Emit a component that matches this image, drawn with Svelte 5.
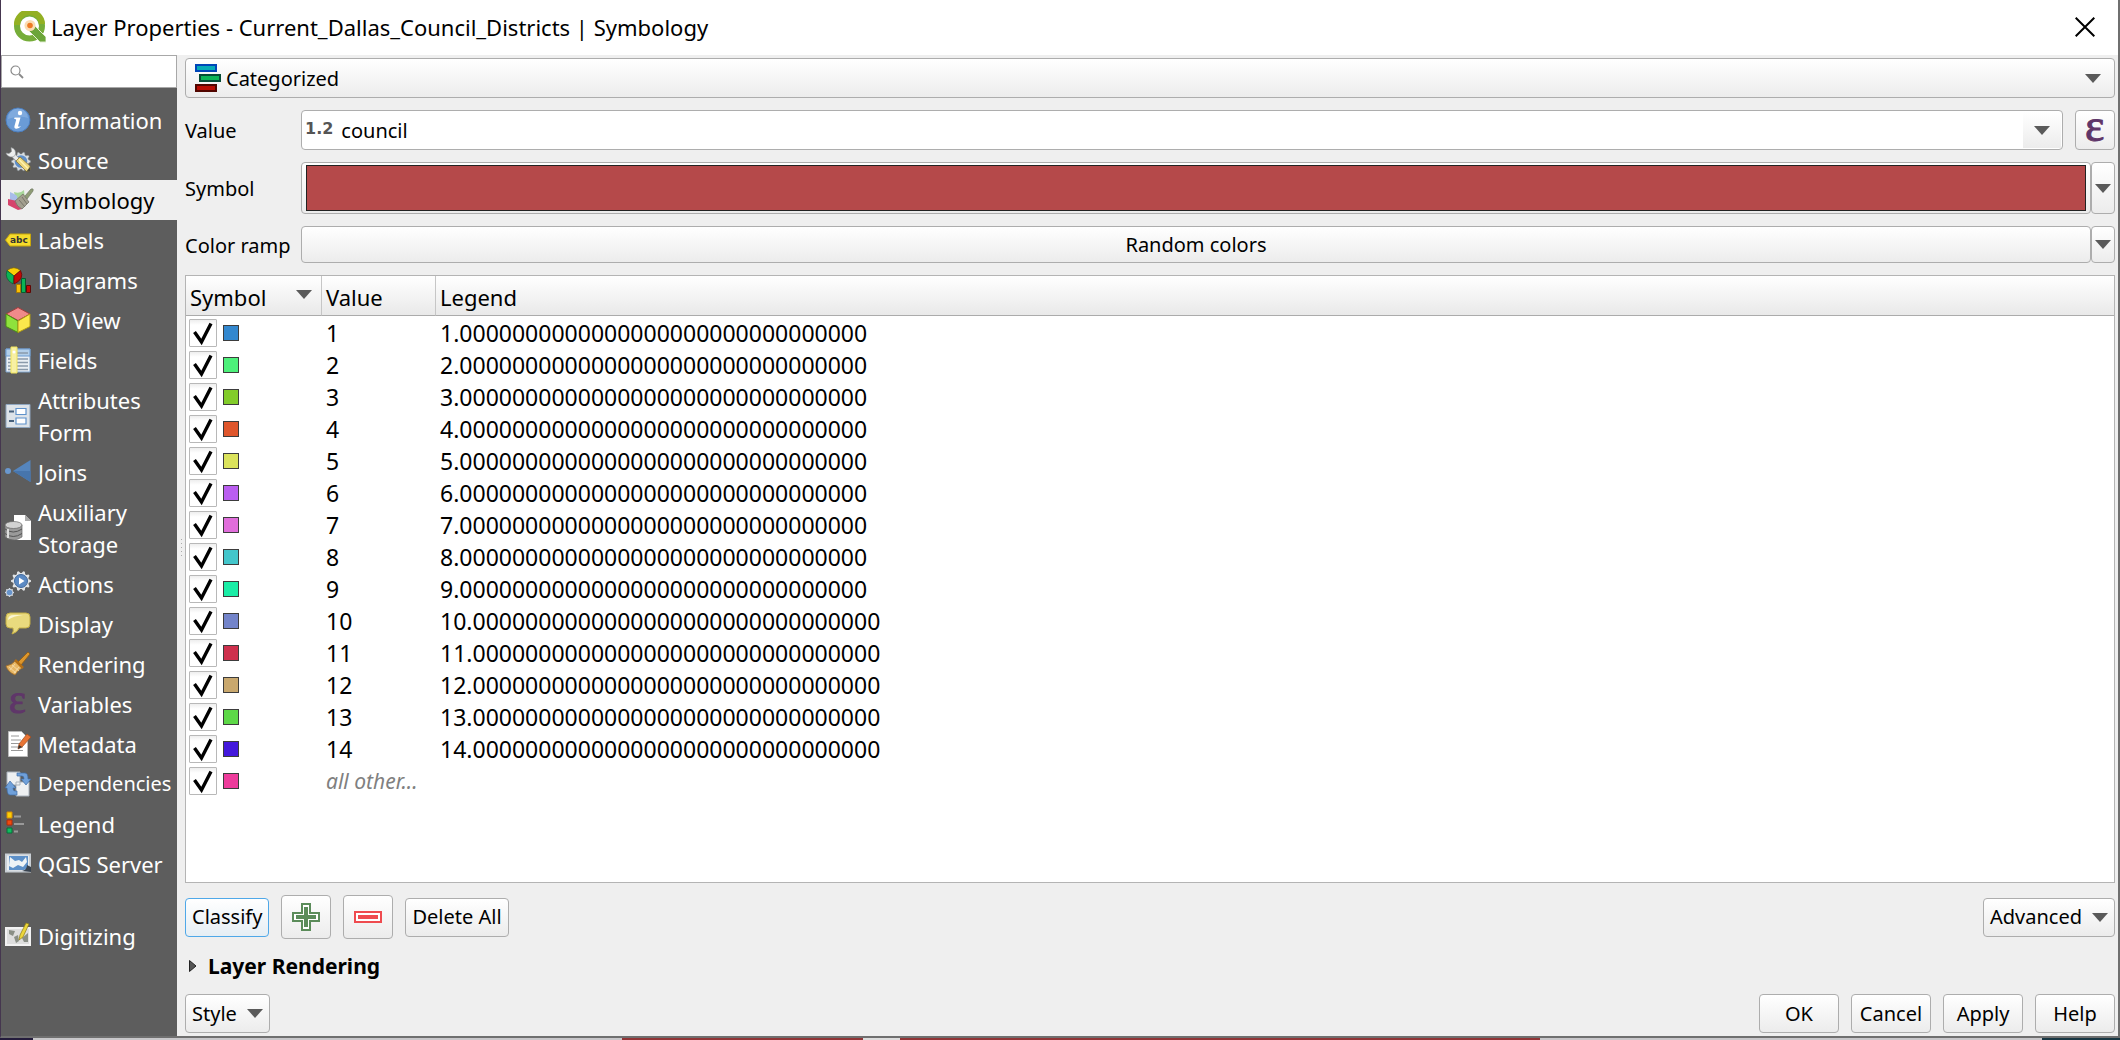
<script>
  const rows = [
    ['1', '#3388cf'], ['2', '#4df07a'], ['3', '#82cc2a'], ['4', '#df562c'], ['5', '#dbe35c'],
    ['6', '#ba5ef0'], ['7', '#e06edb'], ['8', '#43c6cb'], ['9', '#1aeda6'], ['10', '#7384ca'],
    ['11', '#ce304d'], ['12', '#c9a86e'], ['13', '#5dd847'], ['14', '#4318dc'], ['', '#ee3c9c']
  ];
  const zeros = '0'.repeat(31);
  const items = [
    ['Information', 'info'], ['Source', 'source'], ['Symbology', 'symbology'], ['Labels', 'labels'],
    ['Diagrams', 'diagrams'], ['3D View', 'cube'], ['Fields', 'fields'], ['Attributes Form', 'form'],
    ['Joins', 'joins'], ['Auxiliary Storage', 'storage'], ['Actions', 'actions'], ['Display', 'display'],
    ['Rendering', 'rendering'], ['Variables', 'variables'], ['Metadata', 'metadata'],
    ['Dependencies', 'deps'], ['Legend', 'legend'], ['QGIS Server', 'server'], ['Digitizing', 'digitizing']
  ];
  const gear = (cx, cy, r, n) => {
    let d = '';
    for (let i = 0; i < n * 4; i++) {
      const a = ((i - 0.5) / (n * 4)) * Math.PI * 2;
      const q = i % 4 < 2 ? r : r * 0.8;
      d += `${i ? 'L' : 'M'}${(cx + q * Math.cos(a)).toFixed(2)} ${(cy + q * Math.sin(a)).toFixed(2)}`;
    }
    return d + 'Z';
  };
</script>

{#snippet arrow()}
  <svg class="arrow" viewBox="0 0 16 9" aria-hidden="true"><path d="M0 0H16L8 9Z" fill="#5a5a5a" /></svg>
{/snippet}

{#snippet icon(name)}
  <svg class="icon" viewBox="0 0 26 26" aria-hidden="true">
    {#if name === 'info'}
      <circle cx="13" cy="13" r="12" fill="#6a9bd6" stroke="#4b7dbc" />
      <path d="M3 12a10 10 0 0 1 20-1q-9-3-20 1z" fill="#8db4e2" opacity=".6" />
      <circle cx="15" cy="6" r="2.2" fill="#fff" />
      <path d="M9.500 10.500h6l-2.400 8.400q0 1.400 3 .1-2 2.800-4.800 2.700-2.500-.2-1.800-2.700l1.700-6.300q-.2-.8-2-.6z" fill="#fff" />
    {:else if name === 'source'}
      <path d={gear(16, 14.500, 9.500, 10)} fill="#d9dde0" stroke="#8b9498" stroke-width=".5" />
      <circle cx="16" cy="14.500" r="6.300" fill="#5f8fc9" />
      <path d="M6 6l9 9" stroke="#8b8f90" stroke-width="5" /><path d="M6 6l9 9" stroke="#e9ebec" stroke-width="3.600" />
      <path d="M1 6a5.500 5.500 0 0 0 9 2.500A5.500 5.500 0 0 0 6 .500l.500 4-2.500 2z" fill="#eceeee" stroke="#8b8f90" stroke-width=".6" />
      <path d="M11 14l4-4 10 9v4l-3 2z" fill="#ecd77c" stroke="#8a7738" stroke-width=".8" />
      <path d="M14 12.500l9 9" stroke="#fff3b0" stroke-width="1.400" /><path d="M25 20v4l-4 1z" fill="#4a4a3a" />
    {:else if name === 'symbology'}
      <path d="M7 5q6 2 10-2l1 10-8 6z" fill="#a8d69a" />
      <path d="M3 5q5 2 7 4l1 6-8-1z" fill="#a9bdea" />
      <path d="M1 12l9 2 5 8-4 1-10-5z" fill="#d6446c" />
      <path d="M8 14l8-7 6 8-7 7q-5-2-7-8z" fill="#a39f8f" stroke="#77756a" stroke-width=".8" />
      <path d="M12 13l6 7M15 10l5 7" stroke="#77756a" />
      <path d="M18 9l6-7q3-1 2 2l-6 8z" fill="#8f9c75" stroke="#77806a" stroke-width=".8" />
    {:else if name === 'labels'}
      <path d="M0.500 13L5 7H25.500V19H5Z" fill="#f6dc2c" stroke="#c9a80b" />
      <text x="5" y="16" class="abc">abc</text>
    {:else if name === 'diagrams'}
      <path d="M9 9L2 3.500Q9-2 15.500 3.500Z" fill="#fbd006" stroke="#7c6405" stroke-width=".7" />
      <path d="M9 9L2 3.500Q-1 12 8 17Z" fill="#0bb455" stroke="#075b30" stroke-width=".7" />
      <path d="M9 9L15.500 3.500Q20 12 9 17Z" fill="#c20b06" stroke="#5e0804" stroke-width=".7" />
      <path d="M11.500 17.500h4v8h-4z" fill="#fbc006" stroke="#a97b04" />
      <path d="M16.500 11.500h4v14h-4z" fill="#0bb455" stroke="#075b30" />
      <path d="M21.500 18.500h4v7h-4z" fill="#c20b06" stroke="#5e0804" />
    {:else if name === 'cube'}
      <path d="M13 .500L25 7 13 13.500 1 7Z" fill="#f08a8a" stroke="#a33c3c" />
      <path d="M1 7l12 7v11.500L1 19.500Z" fill="#8ee23c" stroke="#4b8f14" />
      <path d="M25 7L13 14v11.500l12-6Z" fill="#fbe84c" stroke="#b09b12" />
    {:else if name === 'fields'}
      <path d="M1 2h24v23H1z" fill="#eaeff4" stroke="#7ea3cc" />
      <path d="M1 2h24v7H1z" fill="#b3cfea" stroke="#6d9bd0" />
      <path d="M12 6h11M3 12h20M3 15.500h20M3 19h20M3 22.500h20" stroke="#8a9aab" stroke-width="1.300" />
      <path d="M6 0h6v26H6z" fill="#f7f0a4" stroke="#efe35a" /><circle cx="9" cy="5" r="1.500" fill="#fff" />
    {:else if name === 'form'}
      <path d="M1 1.500h24v23H1z" fill="#dde3e9" stroke="#8fa6bf" />
      <path d="M4 8.500h5M4 18h5" stroke="#46607c" stroke-width="2" />
      <path d="M11 5.500h10v6H11zM11 15h10v6H11z" fill="#fff" stroke="#5f92cb" stroke-width="1.200" />
    {:else if name === 'joins'}
      <circle cx="3" cy="12" r="3" fill="#6a98cf" />
      <path d="M8 12L25.500 1v22z" fill="#5585bd" /><path d="M8 12L25.500 12v11z" fill="#4775ac" />
    {:else if name === 'storage'}
      <path d="M9 0h11l6 6v19H9z" fill="#fff" /><path d="M20 0v6h6z" fill="#aaa" />
      <path d="M0 10v12q8 6 17 0V10z" fill="#9a9a9a" stroke="#666" stroke-width=".7" />
      <ellipse cx="8.500" cy="10" rx="8.500" ry="3.500" fill="#d2d2d2" stroke="#666" stroke-width=".7" />
      <path d="M0 14q8 6 17 0M0 18.500q8 6 17 0" fill="none" stroke="#555" />
      <path d="M3 14v9" stroke="#ddd" stroke-width="2" />
    {:else if name === 'actions'}
      <path d={gear(16, 10, 10, 10)} fill="#e2e4e6" />
      <circle cx="16" cy="10" r="6.500" fill="#5b8ac4" stroke="#41699b" />
      <path d="M14 6.500v7l5.500-3.500z" fill="#fff" />
      <path d={gear(4.500, 21.500, 4.500, 8)} fill="#d5dbe2" /><circle cx="4.500" cy="21.500" r="2.800" fill="#6794cc" />
    {:else if name === 'display'}
      <path d="M5 2h16q4 0 4 4v7q0 4-4 4h-7q-1 4-7 6 2-3 1-6H5q-4 0-4-4V6q0-4 4-4z" fill="#e9da7e" stroke="#c3ae45" />
      <path d="M3 9q0-5 6-5h9q-10 1-15 5z" fill="#fbf6d2" />
    {:else if name === 'rendering'}
      <path d="M13 11L23 1l2 2-9 11z" fill="#dd962c" stroke="#8f5c12" stroke-width=".8" />
      <path d="M1 15q6-1 9-5l7 7q-4 2-7 7-7-3-9-9z" fill="#e8b765" stroke="#a87024" stroke-width=".8" />
      <path d="M10 9l8 8" stroke="#b46e15" stroke-width="2.500" />
      <path d="M4 16l7 6M7 14l7 6M5 19l5-6M9 22l5-6" stroke="#f6deb0" stroke-width=".8" />
    {:else if name === 'variables'}
      <text x="4" y="22" class="eps">ε</text>
    {:else if name === 'metadata'}
      <path d="M3.500.5h13l6 6v19h-19z" fill="#fff" stroke="#bbb" />
      <path d="M6 5h8M6 9h10M6 12.500h12M6 16h12M6 19.500h12" stroke="#999" stroke-width="1.200" />
      <path d="M13 18l1-5 8-10 4 3-9 10z" fill="#e87434" stroke="#a14b1a" stroke-width=".7" /><path d="M13 18l1-4 3 2z" fill="#333" />
    {:else if name === 'deps'}
      <path d="M2 1h13v13H2zM11 11h13v14H11z" fill="#eef0f2" stroke="#a9b2bc" />
      <path d="M12 2h8q3 0 3 6h3l-5 6-5-6h3q0-3-2-3h-5z" fill="#6fa0da" stroke="#3f6da8" stroke-width=".7" />
      <path d="M12 24H5q-3 0-3-7h-2l5-7 6 7H8q0 3 2 3h2z" fill="#6fa0da" stroke="#3f6da8" stroke-width=".7" />
    {:else if name === 'legend'}
      <path d="M2 1h5v6H2z" fill="#fbd006" stroke="#d88a04" /><path d="M2 9h5v5H2z" fill="#f04a10" stroke="#b02c08" /><path d="M2 17h5v5H2z" fill="#10bb60" stroke="#077038" />
      <path d="M9 5.500h7M9 13h10M9 20.500h4" stroke="#999" stroke-width="2" />
    {:else if name === 'server'}
      <path d="M1 3.500h24v17H1z" fill="#e9edf0" stroke="#c9cfd5" stroke-width="2" />
      <path d="M4 5h19v12l-4 2H4z" fill="#5d90c8" /><path d="M5 6l5 4 4-1 3 2 4-5 1 5-4 5-5-2-5 3-4-2z" fill="#eef3f6" /><path d="M17 20q5-1 5-6l4 2v5z" fill="#3a4450" />
    {:else if name === 'digitizing'}
      <path d="M1 5h24v17H1z" fill="#dedede" stroke="#f2f2f2" stroke-width="2" />
      <path d="M4 7l6 1-2 5-4-2zM9 14l4-2 1 6-3 2zM17 15l6-5v9h-4z" fill="#8a8f86" />
      <path d="M14 17l1-5 6-12 3 1-6 13z" fill="#ecd63b" stroke="#8c7b15" stroke-width=".7" />
    {/if}
  </svg>
{/snippet}

<div class="window">
  <header>
    <svg class="logo" viewBox="0 0 32 32" aria-hidden="true">
      <circle cx="15.500" cy="15" r="12.500" fill="none" stroke="#76ad39" stroke-width="6" />
      <path d="M3 14a12.500 12.500 0 0 1 25-1" fill="none" stroke="#93b023" stroke-width="6" />
      <path d="M15 14l6 1 11 11v5h-6L15 20z" fill="#6ba539" stroke="#e3efd2" />
      <circle cx="16" cy="14.500" r="5.500" fill="#fbdcb2" /><circle cx="16" cy="14.500" r="2.800" fill="#ee7a23" />
    </svg>
    <h1>Layer Properties - Current_Dallas_Council_Districts | Symbology</h1>
    <button class="close" aria-label="Close"><svg viewBox="0 0 20 20"><path d="M.700.7L19.300 19.300M19.300.7L.700 19.300" stroke="#000" stroke-width="2" /></svg></button>
  </header>

  <div class="body">
    <aside>
      <label class="search">
        <svg viewBox="0 0 14 14" aria-hidden="true"><circle cx="5.500" cy="5.500" r="4.500" fill="none" stroke="#888" stroke-width="1.200" /><path d="M9 9l4 4" stroke="#888" stroke-width="1.800" /></svg>
        <input type="text" aria-label="Search" />
      </label>
      <nav>
        {#each items as [label, key]}
          <a href="#{key}" class:selected={key === 'symbology'} class:spaced={key === 'digitizing'} class:tight={key === 'deps'}>
            {@render icon(key)}<span>{label}</span>
          </a>
        {/each}
      </nav>
    </aside>

    <main>
      <button class="box renderer">
        <svg viewBox="0 0 26 28" aria-hidden="true">
          <path d="M1 1h20v6H1z" fill="#06aab9" stroke="#0046b8" stroke-width="2" />
          <path d="M5 11h20v6H5z" fill="#0cb457" stroke="#064c35" stroke-width="2" />
          <path d="M1 21h20v6H1z" fill="#b80c02" stroke="#520600" stroke-width="2" />
        </svg>
        <span>Categorized</span>{@render arrow()}
      </button>

      <div class="form">
        <label class="name" for="value">Value</label>
        <div class="line">
          <div class="box field">
            <b>1.2</b><input id="value" type="text" value="council" />
            <button class="drop" aria-label="Choose value">{@render arrow()}</button>
          </div>
          <button class="box expr" aria-label="Expression"><svg viewBox="0 0 26 26" aria-hidden="true"><text x="3" y="24" class="eps">ε</text></svg></button>
        </div>
        <span class="name">Symbol</span>
        <div class="split symbol">
          <button class="box wide" aria-label="Symbol"><i></i></button>
          <button class="box side" aria-label="Symbol menu">{@render arrow()}</button>
        </div>
        <span class="name">Color ramp</span>
        <div class="split ramp">
          <button class="box wide">Random colors</button>
          <button class="box side" aria-label="Color ramp menu">{@render arrow()}</button>
        </div>
      </div>

      <div class="list">
        <table>
          <thead>
            <tr><th class="c1"><div>Symbol {@render arrow()}</div></th><th class="c2">Value</th><th>Legend</th></tr>
          </thead>
          <tbody>
            {#each rows as [value, color]}
              <tr>
                <td class="first"><div class="mark">
                  <span class="check"><input type="checkbox" checked aria-label={value || 'all other values'} />
                    <svg viewBox="0 0 28 28" aria-hidden="true"><path d="M5.500 13L12.500 23L22 4.500" fill="none" stroke="#000" stroke-width="3.400" /></svg></span>
                  <i style:background={color}></i>
                </div></td>
                {#if value}<td>{value}</td><td>{value}.{zeros}</td>
                {:else}<td class="other">all other...</td><td></td>{/if}
              </tr>
            {/each}
          </tbody>
        </table>
      </div>

      <div class="tools">
        <button class="box primary">Classify</button>
        <button class="box tool" aria-label="Add category"><svg viewBox="0 0 28 28"><path d="M10 1h8v9h9v8h-9v9h-8v-9H1v-8h9z" fill="#fff" stroke="#5b8c5a" stroke-width="2" /><path d="M14 4v20M4 14h20" stroke="#5b8c5a" stroke-width="4" /></svg></button>
        <button class="box tool" aria-label="Remove category"><svg viewBox="0 0 28 28"><path d="M1 9h26v10H1z" fill="#fff" stroke="#ef4b4f" stroke-width="2" /><path d="M4 14h20" stroke="#ef4b4f" stroke-width="4" /></svg></button>
        <button class="box">Delete All</button>
        <button class="box menu end">Advanced {@render arrow()}</button>
      </div>

      <button class="group"><svg viewBox="0 0 8 12" aria-hidden="true"><path d="M.500.5v11L7 6z" fill="#555" stroke="#222" /></svg>Layer Rendering</button>

      <footer>
        <button class="box menu">Style {@render arrow()}</button>
        <div class="actions">
          <button class="box">OK</button><button class="box">Cancel</button><button class="box">Apply</button><button class="box">Help</button>
        </div>
      </footer>
      <div class="grip" aria-hidden="true"></div>
    </main>
  </div>
</div>
<div class="behind" aria-hidden="true"><i class="dark"></i><i class="grey"></i><i class="red"></i><i class="gap"></i><i class="red wide"></i><i class="grey rest"></i><i class="teal"></i></div>

<style>
  :global(body) { background: #c5c4c6; }
  :global(#app) { height: 100vh; display: flex; flex-direction: column; }
  * { box-sizing: border-box; }
  .window { flex: 1; min-height: 0; display: flex; flex-direction: column; border: solid #6f6f6f; border-width: 0 2px 2px 0; border-left: 1px solid #45364f; background: #efefef; font: 22px/32px "Noto Sans", sans-serif; color: #000; }
  button, input { font: inherit; color: inherit; }
  header { height: 55px; flex: none; display: flex; align-items: center; background: #fff; padding: 0 23px 2px 13px; }
  .logo { width: 32px; height: 32px; margin-right: 5px; }
  h1 { font-size: 22px; font-weight: 400; margin: 0; }
  .close { margin-left: auto; border: 0; background: none; padding: 0; height: 20px; }
  .close svg { width: 20px; height: 20px; display: block; }
  .body { flex: 1; display: flex; min-height: 0; }
  aside { width: 176px; flex: none; background: #5d5d5d; }
  .search { height: 33px; display: flex; align-items: center; gap: 4px; padding-left: 8px; background: #fff; border: 1px solid #a8a8a8; }
  .search svg { width: 14px; height: 14px; flex: none; }
  .search input { flex: 1; min-width: 0; height: 24px; border: 0; outline: 0; padding: 0; background: none; }
  nav { padding-top: 12px; display: flex; flex-direction: column; color: #fff; }
  nav a { min-height: 40px; padding: 4px 0 4px 4px; display: flex; align-items: center; gap: 7px; color: #fff; text-decoration: none; }
  nav a.selected { background: #efefef; color: #000; padding-left: 6px; }
  nav a.spaced { margin-top: 32px; }
  nav a.tight { font-size: 20px; }
  .icon { width: 26px; height: 26px; flex: none; overflow: visible; }
  .abc { font: 700 9px "DejaVu Sans", sans-serif; fill: #333; }
  .eps { font: 400 40px "Liberation Serif", serif; fill: #5f3669; stroke: #5f3669; stroke-width: 1px; }
  main { position: relative; flex: 1; min-width: 0; display: flex; flex-direction: column; padding: 3px 3px 3px 8px; font-size: 20px; }
  .box { border: 1px solid #adadad; border-radius: 4px; background: linear-gradient(#fff, #ececec); padding: 0 6px; display: flex; align-items: center; justify-content: center; height: 39px; white-space: nowrap; }
  .arrow { width: 16px; height: 9px; flex: none; }
  .renderer { height: 40px; justify-content: flex-start; padding: 0 13px 0 9px; gap: 5px; }
  .renderer svg:first-child { width: 26px; height: 28px; }
  .renderer span, .name { padding-top: 2px; }
  .renderer .arrow { margin-left: auto; }
  .form { display: grid; grid-template-columns: 104px 1fr; column-gap: 12px; row-gap: 12px; align-items: center; padding: 12px 0; white-space: nowrap; }
  .line { display: flex; gap: 12px; }
  .field { flex: 1; height: 40px; background: #fff; padding: 1px 1px 1px 3px; justify-content: flex-start; gap: 8px; }
  .field b { font: 700 16px/24px "DejaVu Sans", sans-serif; color: #555; padding-bottom: 2px; }
  .field input { flex: 1; min-width: 0; border: 0; outline: 0; background: none; padding: 2px 0 0; }
  .drop { width: 38px; height: 36px; border: 0; padding: 0; background: linear-gradient(#fff, #ececec); }
  .drop .arrow { display: block; margin: 0 auto; }
  .expr { width: 40px; height: 40px; }
  .expr svg { width: 26px; height: 26px; flex: none; overflow: visible; }
  .expr .eps { font-size: 46px; }
  .split { display: flex; }
  .wide { flex: 1; min-width: 0; height: 100%; }
  .side { width: 24px; height: 100%; padding: 0; }
  .symbol { height: 52px; }
  .symbol .wide { padding: 2px 4px; }
  .symbol i { flex: 1; height: 46px; background: #b5494a; border: 1px solid #222; }
  .ramp { height: 37px; }
  .list { flex: 1; min-height: 0; background: #fff; border: 1px solid #b4b4b4; font-size: 22px; }
  table { width: 100%; border-collapse: separate; border-spacing: 0; table-layout: fixed; }
  th { height: 40px; padding: 2px 4px 0; border-bottom: 1px solid #ababab; border-right: 1px solid #c6c6c6; background: linear-gradient(#fff, #e9e9e9); text-align: left; font-weight: 400; }
  th:last-child { border-right: 0; }
  .c1 { width: 136px; }
  .c2 { width: 114px; }
  th div { display: flex; justify-content: space-between; padding-right: 5px; }
  th .arrow { margin-top: 9px; }
  td { height: 32px; padding: 2px 4px 0; line-height: 30px; font-size: 23px; }
  td.first { padding-left: 3px; }
  .mark { display: flex; gap: 6px; }
  .check { position: relative; width: 28px; height: 28px; }
  .check input { appearance: none; display: block; margin: 0; width: 28px; height: 28px; border: 1px solid #b8b8b8; border-radius: 1px; background: linear-gradient(#eee, #fff 5px); }
  .check svg { position: absolute; inset: 0; pointer-events: none; }
  .mark i { width: 16px; height: 16px; margin-top: 6px; border: 1px solid #3c3c3c; }
  td.other { color: #808080; font-style: italic; font-size: 21px; white-space: nowrap; }
  .tools { display: flex; align-items: center; gap: 12px; padding: 12px 0; }
  .tool { width: 50px; height: 44px; }
  .tool svg { width: 28px; height: 28px; flex: none; }
  .primary { border-color: #4fa8e8; background: linear-gradient(#fff, #e6eef4); }
  .menu { gap: 10px; }
  .end { margin-left: auto; }
  .group { align-self: flex-start; display: flex; align-items: center; gap: 11px; border: 0; background: none; padding: 0 4px; height: 30px; font-weight: 700; font-size: 21px; }
  .group svg { width: 8px; height: 12px; }
  footer { display: flex; justify-content: space-between; padding-top: 13px; }
  .actions { display: flex; gap: 12px; }
  .actions .box { width: 80px; }
  .grip { position: absolute; left: 4px; top: 484px; width: 1px; height: 17px; background: repeating-linear-gradient(#aaa 0 1px, transparent 1px 4px); }
  .behind { height: 2px; flex: none; display: flex; background: #c8c7ca; }
  .behind i { height: 2px; }
  .dark { width: 33px; background: #241c3c; }
  .grey { flex: 589; }
  .red { flex: 241; background: #913436; }
  .gap { flex: 37; background: #ddd; }
  .red.wide { flex: 640; height: 2px; }
  .rest { flex: 502; }
  .teal { flex: 78; background: #183743; }
</style>
